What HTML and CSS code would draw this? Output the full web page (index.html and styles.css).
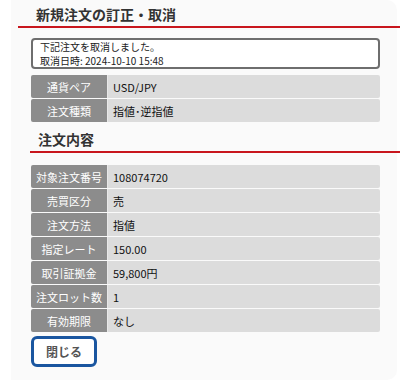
FILE: index.html
```html
<!DOCTYPE html>
<html lang="ja">
<head>
  <meta charset="UTF-8" />
  <title>新規注文の訂正・取消</title>
  <link rel="stylesheet" href="styles.css">
</head>
<body>
  <div class="panel">
    <h2 class="title first">新規注文の訂正・取消</h2>
    <div class="message">
      <p>下記注文を取消しました。</p>
      <p>取消日時: 2024-10-10 15:48</p>
    </div>
    <table class="info">
      <tr><th>通貨ペア</th><td>USD/JPY</td></tr>
      <tr><th>注文種類</th><td>指値･逆指値</td></tr>
    </table>

    <h2 class="title second">注文内容</h2>
    <table class="info detail">
      <tr><th>対象注文番号</th><td>108074720</td></tr>
      <tr><th>売買区分</th><td>売</td></tr>
      <tr><th>注文方法</th><td>指値</td></tr>
      <tr><th>指定レート</th><td>150.00</td></tr>
      <tr><th>取引証拠金</th><td>59,800円</td></tr>
      <tr><th>注文ロット数</th><td>1</td></tr>
      <tr><th>有効期限</th><td>なし</td></tr>
    </table>

    <button class="close">閉じる</button>
  </div>
</body>
</html>
```

FILE: styles.css
```css
body {
  margin: 0;
  background: #ffffff;
  font-family: "Noto Sans CJK JP", "Liberation Sans", sans-serif;
  color: #222;
}
.panel {
  margin-left: 11px;
  margin-right: 3px;
  height: 380px;
  background: #fafafa;
  border-radius: 0 10px 10px 0;
  padding: 1px 0 0 0;
  box-sizing: border-box;
}
.title {
  margin: 0;
  font-size: 14px;
  font-weight: bold;
  color: #333;
  border-bottom: 2px solid #c8161d;
  line-height: 18px;
}
.title.first {
  margin: 4px -3px 0 7px;
  padding: 0 0 3px 18px;
}
.title.second {
  margin: 7px -3px 0 19px;
  padding: 0 0 3px 8px;
}
.message {
  margin: 10px 17px 0 20px;
  border: 2px solid #6e6e6e;
  border-radius: 4px;
  background: #fff;
  font-size: 10px;
  padding: 0 7px;
  color: #222;
}
.message p {
  margin: 0;
  line-height: 13.5px;
}
.info {
  margin: 5px 17px 0 20px;
  width: calc(100% - 37px);
  border-collapse: separate;
  border-spacing: 0 1px;
  font-size: 11px;
}
.info.detail {
  margin-top: 11px;
}
.info th,
.info td {
  height: 23px;
  padding: 0;
}
.info th {
  width: 76px;
  background: #8c8c8c;
  color: #fff;
  font-weight: normal;
  text-align: center;
  border-radius: 2px 0 0 2px;
}
.info td {
  background: #dcdcdc;
  border-left: 1px solid #e8e8e8;
  padding-left: 5px;
  color: #111;
  border-radius: 0 2px 2px 0;
}
.close {
  margin: 3px 0 0 20px;
  width: 66px;
  height: 31px;
  border: 3px solid #1a56a0;
  border-radius: 6px;
  background: #fff;
  color: #555;
  font-family: inherit;
  font-size: 12px;
  font-weight: bold;
  padding: 0;
}
```
